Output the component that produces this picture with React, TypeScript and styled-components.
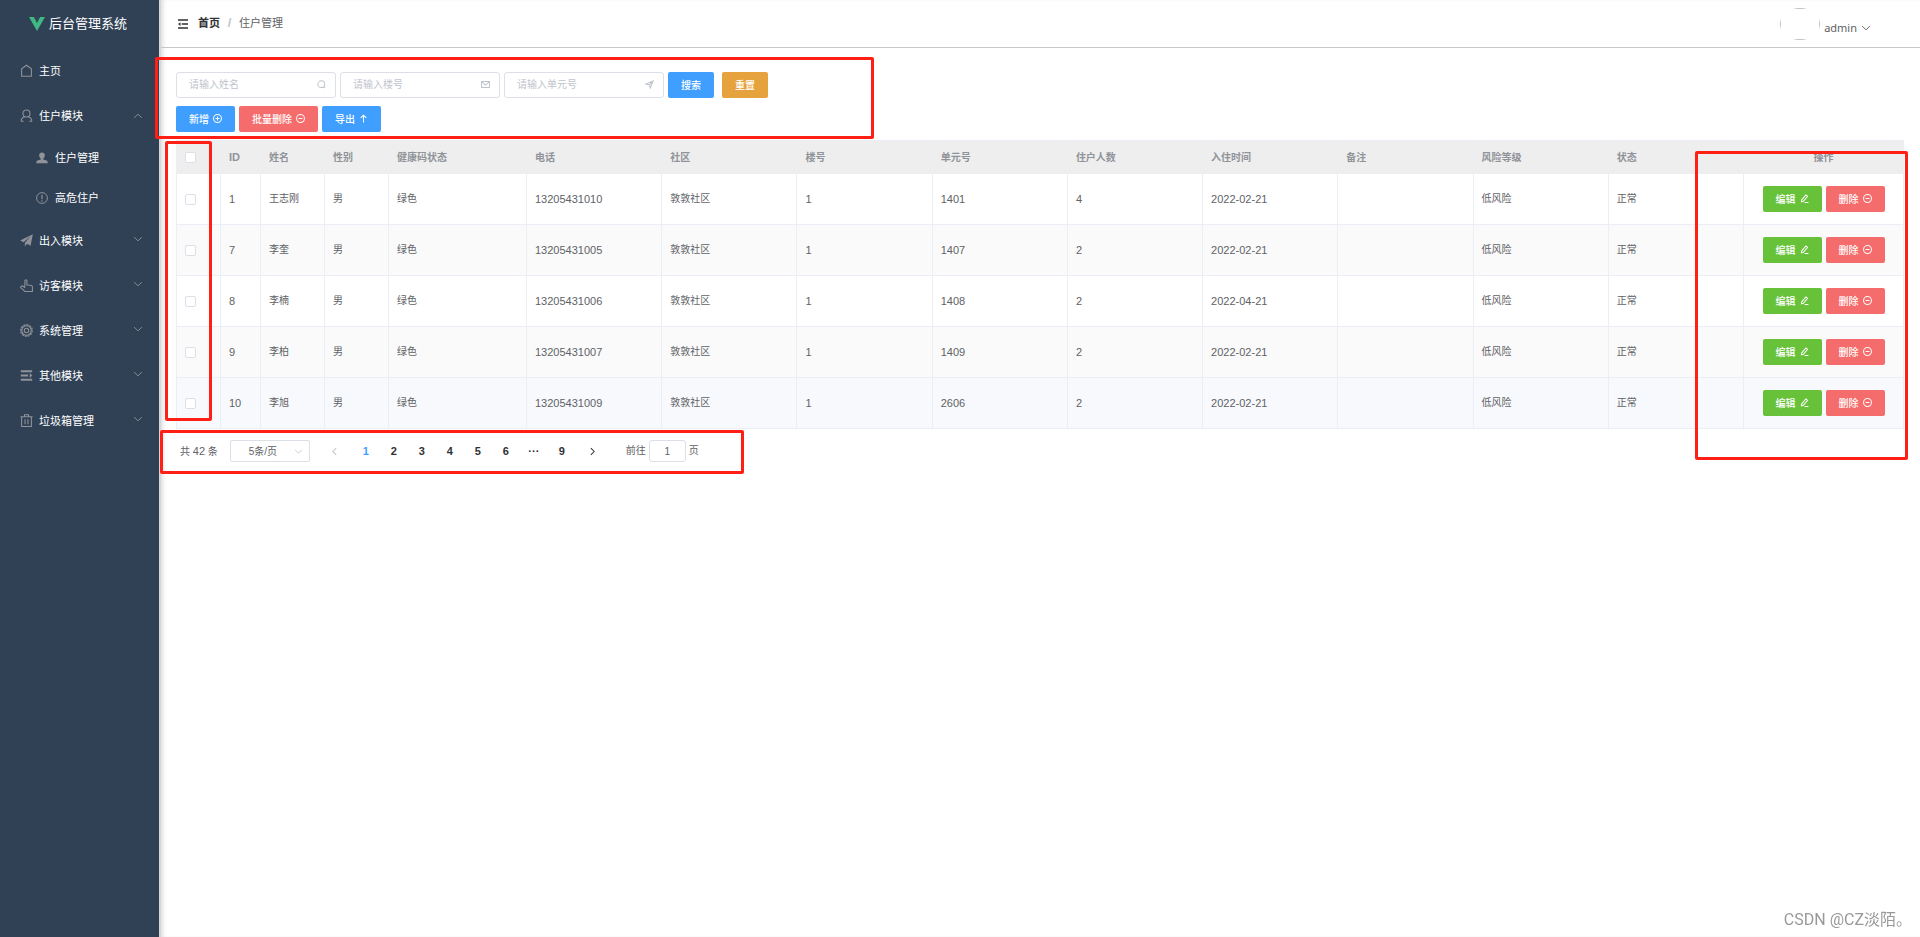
import React from "react";
import styled, { createGlobalStyle, css } from "styled-components";

const GlobalStyle = createGlobalStyle`
  *, *::before, *::after { box-sizing: border-box; }
  body {
    margin: 0;
    background: #fff;
    color: #606266;
    font-family: "Liberation Sans", "Noto Sans CJK SC", sans-serif;
    font-size: 10px;
    line-height: 16px;
  }
  button, input, select { font-family: inherit; }
`;

/* ---------- icons ---------- */

type IconName =
  | "home" | "user" | "userSolid" | "warning" | "plane" | "pointer" | "gear" | "operation" | "trash"
  | "down" | "up" | "left" | "right" | "search" | "mail" | "position"
  | "plus" | "minus" | "top" | "edit" | "fold";

const shapes: Record<IconName, React.ReactNode> = {
  home: <path d="M2 15V6l6-4.500L14 6v9z" />,
  user: <><circle cx="8" cy="5.500" r="4.300" /><path d="M1.500 15c0-3 2-5 4.500-5.500M14.500 15c0-3-2-5-4.500-5.500M1 15h3.500M11.500 15H15" /></>,
  userSolid: <path fill="currentColor" stroke="none" d="M8 .5c2.400 0 3.800 1.700 3.800 3.900 0 2-1 3.800-2.200 4.600v1l4.600 1.400c.8.300 1.300 1 1.300 1.900V15H.5v-1.700c0-.9.5-1.600 1.300-1.900L6.400 10V9C5.200 8.200 4.200 6.400 4.200 4.400 4.200 2.200 5.600.5 8 .5z" />,
  warning: <><circle cx="8" cy="8" r="7.200" /><path strokeWidth="1.600" d="M8 3.500v6M8 11v1.500" /></>,
  plane: <path fill="currentColor" stroke="none" d="M15.800.3L13 14.500 8.500 12 6 15.500V11l7-8.500L4.500 10 .2 8z" />,
  pointer: <path d="M6 10V2.200c0-1.600 2.500-1.600 2.500 0V7l5.500 1c1 .3 1.300 1 1.300 2v5.300H6L.8 10.500C.8 8.500 3 8 4 9l2 2" />,
  gear: <><path strokeDasharray="2.400 1.200" strokeWidth="1.600" d="M8 .9a7.100 7.100 0 1 1 0 14.200A7.100 7.100 0 1 1 8 .9" /><circle cx="8" cy="8" r="5.800" /><circle cx="8" cy="8" r="2.700" /></>,
  operation: <><path strokeWidth="2.400" d="M1 2.800h14M1 8h9M1 13.200h14" /><path fill="currentColor" stroke="none" d="M12 5l3.200 3L12 11z" /></>,
  trash: <path d="M.5 3.500h15M5.500 3V1h5v2M2 3.500v11.800h12V3.500M6.200 6.500v6M9.800 6.500v6" />,
  down: <path d="M2 5l6 6 6-6" />,
  up: <path d="M2 11l6-6 6 6" />,
  left: <path d="M11 2L5 8l6 6" />,
  right: <path d="M5 2l6 6-6 6" />,
  search: <><circle cx="7.500" cy="7.500" r="6" /><path d="M12 12l2.500 2.500" /></>,
  mail: <path d="M1 2.500h14v11H1zM1.500 3.500L8 9l6.500-5.500" />,
  position: <path d="M14.500 1.500L1.200 7.200 7.800 8.500 9.500 14.500zM14.500 1.500L7.800 8.500" />,
  plus: <><circle cx="8" cy="8" r="7" /><path d="M8 4.500v7M4.500 8h7" /></>,
  minus: <><circle cx="8" cy="8" r="7" /><path d="M4.500 8h7" /></>,
  top: <path d="M8 15V2M3 7l5-5 5 5" />,
  edit: <path d="M3 10.500L10.500 1.500l3 2.500L6 13l-3.500 1zM8 15h7" />,
  fold: <><path strokeWidth="2.400" d="M0 1.500h16M6 8h10M0 14.500h16" /><path fill="currentColor" stroke="none" d="M0 8l4-3v6z" /></>,
};

const Svg = styled.svg<{ $size: number }>`
  flex: none;
  width: ${(p) => p.$size}px;
  height: ${(p) => p.$size}px;
  fill: none;
  stroke: currentColor;
`;

function Icon({ name, size = 10, weight = 1.5 }: { name: IconName; size?: number; weight?: number }) {
  return (
    <Svg $size={size} viewBox="0 0 16 16" strokeWidth={weight} aria-hidden="true">
      {shapes[name]}
    </Svg>
  );
}

/* ---------- shell ---------- */

const Shell = styled.div`
  display: flex;
  min-height: 100vh;
`;

const Sidebar = styled.aside`
  flex: none;
  width: 159px;
  background: #304156;
  color: #fff;
`;

const Brand = styled.div`
  display: flex;
  align-items: center;
  gap: 4px;
  height: 48px;
  padding-left: 29px;
  font-size: 13px;
`;

const Logo = styled.svg`
  width: 16px;
  height: 14px;
`;

const Menu = styled.nav`
  display: flex;
  flex-direction: column;
`;

const MenuLink = styled.a<{ $sub?: boolean }>`
  display: flex;
  align-items: center;
  gap: ${(p) => (p.$sub ? 7 : 6)}px;
  height: ${(p) => (p.$sub ? 40 : 45)}px;
  padding: 0 16px 0 ${(p) => (p.$sub ? 36 : 20)}px;
  color: #fff;
  font-size: 11px;
  text-decoration: none;
  svg { color: #909399; }
`;

const MenuText = styled.span`
  flex: 1;
`;

const MenuArrow = styled.span<{ $open: boolean }>`
  display: flex;
  padding-bottom: ${(p) => (p.$open ? 0 : 4)}px;
`;

const Main = styled.div`
  display: flex;
  flex: 1;
  flex-direction: column;
  min-width: 0;
  border-left: 2px solid #d5d6da;
  box-shadow: inset 4px 0 4px -2px #dcdde0;
`;

const Header = styled.header`
  display: flex;
  align-items: center;
  height: 48px;
  padding: 0 49px 0 17px;
  border-bottom: 1px solid #c8c8cb;
`;

const FoldButton = styled.button`
  display: flex;
  margin-right: 10px;
  padding: 0;
  border: 0;
  background: none;
  color: #303133;
`;

const Crumbs = styled.nav`
  display: flex;
  flex: 1;
  gap: 7px;
  padding-bottom: 2px;
  font-size: 11px;
`;

const CrumbLink = styled.a`
  color: #303133;
  font-weight: 700;
  text-decoration: none;
`;

const Slash = styled.span`
  width: 5px;
  color: #c0c4cc;
  font-size: 13px;
  font-weight: 700;
  text-align: center;
`;

const Account = styled.button`
  display: flex;
  align-items: center;
  gap: 4px;
  padding: 0;
  border: 0;
  background: none;
  color: #606266;
  font-size: 11px;
`;

const AccountName = styled.span`
  padding-top: 8px;
  font-family: "Noto Sans", sans-serif;
`;

const AccountArrow = styled.span`
  display: flex;
  padding-top: 8px;
`;

const Avatar = styled.span`
  width: 40px;
  height: 32px;
  border-radius: 50%;
  overflow: hidden;
  &::before {
    content: "";
    display: block;
    height: 100%;
    border: 1px solid #c0c0c0;
  }
`;

const Content = styled.main`
  display: flex;
  flex-direction: column;
  padding: 24px 16px 16px 15px;
`;

/* ---------- controls ---------- */

const Highlight = styled.div<{ $top: number; $left?: number; $right?: number; $width: number; $height: number }>`
  position: absolute;
  top: ${(p) => p.$top}px;
  ${(p) => (p.$right === undefined ? css`left: ${p.$left}px;` : css`right: ${p.$right}px;`)}
  width: ${(p) => p.$width}px;
  height: ${(p) => p.$height}px;
  border: 3px solid #ff1f14;
  border-radius: 2px;
  pointer-events: none;
`;

const Toolbar = styled.section`
  position: relative;
  display: flex;
  flex-direction: column;
  gap: 8px;
  margin-bottom: 8px;
`;

const ToolRow = styled.div`
  display: flex;
  gap: 4px;
`;

const Field = styled.label`
  display: flex;
  align-items: center;
  width: 160px;
  height: 26px;
  padding: 0 9px 2px 12px;
  border: 1px solid #dcdfe6;
  border-radius: 3px;
  color: #c0c4cc;
`;

const FieldInput = styled.input`
  flex: 1;
  min-width: 0;
  padding: 0;
  border: 0;
  outline: 0;
  background: none;
  color: #606266;
  font-size: 10px;
  &::placeholder { color: #c0c4cc; }
`;

const tones = { primary: "#409eff", danger: "#f56c6c", warning: "#e6a23c", success: "#67c23a" };

const Button = styled.button<{ $tone: keyof typeof tones; $spaced?: boolean }>`
  display: inline-flex;
  align-items: center;
  justify-content: center;
  gap: 4px;
  height: 26px;
  margin-left: ${(p) => (p.$spaced ? 4 : 0)}px;
  padding: 0 13px 2px;
  border: 0;
  border-radius: 2px;
  background: ${(p) => tones[p.$tone]};
  color: #fff;
  font-size: 10px;
  font-weight: 500;
`;

/* ---------- table ---------- */

const TableWrap = styled.section`
  position: relative;
`;

const Table = styled.table`
  width: 100%;
  table-layout: fixed;
  border-spacing: 0;
  border-top: 1px solid #ebeef5;
  border-left: 1px solid #ebeef5;
`;

const HeadCell = styled.th<{ $center?: boolean }>`
  height: 33px;
  padding: 0 8px;
  border-right: 1px solid #ebeef5;
  background: #eee;
  color: #909399;
  font-weight: 700;
  text-align: ${(p) => (p.$center ? "center" : "left")};
`;

const Cell = styled.td`
  height: 51px;
  padding: 0 8px;
  border-right: 1px solid #ebeef5;
  border-bottom: 1px solid #ebeef5;
`;

const Row = styled.tr<{ $active?: boolean }>`
  background: #fff;
  &:nth-child(even) { background: #fafafa; }
  ${(p) => p.$active && css`background: #f8f9fc;`}
`;

const Num = styled.span`
  font-size: 11px;
`;

const Check = styled.input`
  display: block;
  appearance: none;
  width: 11px;
  height: 11px;
  margin: 0;
  border: 1px solid #dcdfe6;
  border-radius: 2px;
  background: #fff;
  &:checked { background: #409eff; border-color: #409eff; }
`;

const Actions = styled.div`
  display: flex;
  justify-content: center;
  gap: 4px;
`;

/* ---------- pagination ---------- */

const Pagination = styled.nav`
  position: relative;
  display: flex;
  align-items: center;
  height: 22px;
  margin-top: 11px;
  padding-left: 4px;
`;

const SizeBox = styled.span`
  position: relative;
  display: flex;
  margin: 0 8px 0 12px;
  color: #c0c4cc;
  svg { position: absolute; right: 7px; top: 7px; }
`;

const SizeSelect = styled.select`
  appearance: none;
  width: 80px;
  height: 22px;
  padding: 0 18px 0 4px;
  border: 1px solid #dcdfe6;
  border-radius: 2px;
  background: #fff;
  color: #606266;
  font-size: 10px;
  text-align: center;
  text-align-last: center;
`;

const PageButton = styled.button<{ $active?: boolean; $wide?: boolean }>`
  display: flex;
  align-items: center;
  justify-content: center;
  width: ${(p) => (p.$wide ? 34 : 28)}px;
  height: 22px;
  padding: 0;
  border: 0;
  background: none;
  color: ${(p) => (p.$active ? "#409eff" : "#303133")};
  font-size: 11px;
  font-weight: 700;
  &:disabled { color: #c0c4cc; }
`;

const Jump = styled.label`
  display: flex;
  align-items: center;
  gap: 3px;
  margin-left: 16px;
`;

const JumpInput = styled.input`
  width: 37px;
  height: 22px;
  padding: 0;
  border: 1px solid #dcdfe6;
  border-radius: 3px;
  color: #606266;
  font-size: 10px;
  text-align: center;
`;

const Watermark = styled.div`
  position: fixed;
  right: 8px;
  bottom: 7px;
  color: #999;
  font-family: Roboto, "Noto Sans CJK SC", sans-serif;
  font-size: 16px;
  line-height: 20px;
`;

/* ---------- data ---------- */

const menu: { label: string; icon: IconName; sub?: boolean; arrow?: "up" | "down" }[] = [
  { label: "主页", icon: "home" },
  { label: "住户模块", icon: "user", arrow: "up" },
  { label: "住户管理", icon: "userSolid", sub: true },
  { label: "高危住户", icon: "warning", sub: true },
  { label: "出入模块", icon: "plane", arrow: "down" },
  { label: "访客模块", icon: "pointer", arrow: "down" },
  { label: "系统管理", icon: "gear", arrow: "down" },
  { label: "其他模块", icon: "operation", arrow: "down" },
  { label: "垃圾箱管理", icon: "trash", arrow: "down" },
];

const filters: { label: string; icon: IconName }[] = [
  { label: "请输入姓名", icon: "search" },
  { label: "请输入楼号", icon: "mail" },
  { label: "请输入单元号", icon: "position" },
];

const columns: { title: string; width?: number }[] = [
  { title: "ID", width: 40 },
  { title: "姓名", width: 64 },
  { title: "性别", width: 64 },
  { title: "健康码状态", width: 138 },
  { title: "电话" },
  { title: "社区" },
  { title: "楼号" },
  { title: "单元号" },
  { title: "住户人数" },
  { title: "入住时间" },
  { title: "备注" },
  { title: "风险等级" },
  { title: "状态" },
];

const residents = [
  { id: 1, name: "王志刚", phone: "13205431010", unit: "1401", people: 4, date: "2022-02-21" },
  { id: 7, name: "李奎", phone: "13205431005", unit: "1407", people: 2, date: "2022-02-21" },
  { id: 8, name: "李楠", phone: "13205431006", unit: "1408", people: 2, date: "2022-04-21" },
  { id: 9, name: "李柏", phone: "13205431007", unit: "1409", people: 2, date: "2022-02-21" },
  { id: 10, name: "李旭", phone: "13205431009", unit: "2606", people: 2, date: "2022-02-21" },
];

export default function App() {
  return (
    <>
      <GlobalStyle />
      <Shell>
        <Sidebar>
          <Brand>
            <Logo viewBox="0 0 16 14" aria-hidden="true">
              <path fill="#41b883" d="M0 0h5L8 6l3-6h5L8 14z" />
              <path fill="#35495e" d="M5 0h1.800L8 2.200 9.200 0H11L8 5.200z" />
            </Logo>
            后台管理系统
          </Brand>
          <Menu aria-label="主菜单">
            {menu.map((m) => (
              <MenuLink key={m.label} href="#" $sub={m.sub}>
                <Icon name={m.icon} size={m.sub ? 12 : 13} weight={1.3} />
                <MenuText>{m.label}</MenuText>
                {m.arrow && (
                  <MenuArrow $open={m.arrow === "up"}>
                    <Icon name={m.arrow} size={10} />
                  </MenuArrow>
                )}
              </MenuLink>
            ))}
          </Menu>
        </Sidebar>
        <Main>
          <Header>
            <FoldButton type="button" aria-label="折叠菜单">
              <Icon name="fold" size={10} />
            </FoldButton>
            <Crumbs aria-label="面包屑">
              <CrumbLink href="#">首页</CrumbLink>
              <Slash>/</Slash>
              <span>住户管理</span>
            </Crumbs>
            <Account type="button">
              <Avatar />
              <AccountName>admin</AccountName>
              <AccountArrow><Icon name="down" size={10} /></AccountArrow>
            </Account>
          </Header>
          <Content>
            <Toolbar>
              <ToolRow>
                {filters.map((f) => (
                  <Field key={f.label}>
                    <FieldInput placeholder={f.label} aria-label={f.label} />
                    <Icon name={f.icon} size={9} weight={1.8} />
                  </Field>
                ))}
                <Button type="button" $tone="primary">搜索</Button>
                <Button type="button" $tone="warning" $spaced>重置</Button>
              </ToolRow>
              <ToolRow>
                <Button type="button" $tone="primary">新增<Icon name="plus" size={9} weight={1.8} /></Button>
                <Button type="button" $tone="danger">批量删除<Icon name="minus" size={9} weight={1.8} /></Button>
                <Button type="button" $tone="primary">导出<Icon name="top" size={9} weight={1.8} /></Button>
              </ToolRow>
              <Highlight $top={-15} $left={-21} $width={719} $height={82} />
            </Toolbar>
            <TableWrap>
              <Table>
                <colgroup>
                  <col width={44} />
                  {columns.map((c) => <col key={c.title} width={c.width} />)}
                  <col width={160} />
                </colgroup>
                <thead>
                  <tr>
                    <HeadCell><Check type="checkbox" aria-label="全选" /></HeadCell>
                    {columns.map((c) => <HeadCell key={c.title}>{c.title === "ID" ? <Num>ID</Num> : c.title}</HeadCell>)}
                    <HeadCell $center>操作</HeadCell>
                  </tr>
                </thead>
                <tbody>
                  {residents.map((r) => (
                    <Row key={r.id} $active={r.id === 10}>
                      <Cell><Check type="checkbox" aria-label={`选择 ${r.name}`} /></Cell>
                      <Cell><Num>{r.id}</Num></Cell>
                      <Cell>{r.name}</Cell>
                      <Cell>男</Cell>
                      <Cell>绿色</Cell>
                      <Cell><Num>{r.phone}</Num></Cell>
                      <Cell>敦敦社区</Cell>
                      <Cell><Num>1</Num></Cell>
                      <Cell><Num>{r.unit}</Num></Cell>
                      <Cell><Num>{r.people}</Num></Cell>
                      <Cell><Num>{r.date}</Num></Cell>
                      <Cell />
                      <Cell>低风险</Cell>
                      <Cell>正常</Cell>
                      <Cell>
                        <Actions>
                          <Button type="button" $tone="success">编辑<Icon name="edit" size={9} weight={1.8} /></Button>
                          <Button type="button" $tone="danger">删除<Icon name="minus" size={9} weight={1.8} /></Button>
                        </Actions>
                      </Cell>
                    </Row>
                  ))}
                </tbody>
              </Table>
              <Highlight $top={1} $left={-11} $width={47} $height={280} />
              <Highlight $top={11} $right={-4} $width={213} $height={309} />
            </TableWrap>
            <Pagination aria-label="分页">
              <span>共 <Num>42</Num> 条</span>
              <SizeBox>
                <SizeSelect aria-label="每页条数" defaultValue="5">
                  <option value="5">5条/页</option>
                  <option value="10">10条/页</option>
                </SizeSelect>
                <Icon name="down" size={9} />
              </SizeBox>
              <PageButton type="button" aria-label="上一页" $wide disabled><Icon name="left" size={9} weight={1.8} /></PageButton>
              {["1", "2", "3", "4", "5", "6", "···", "9"].map((p) => (
                <PageButton key={p} type="button" $active={p === "1"}>{p}</PageButton>
              ))}
              <PageButton type="button" aria-label="下一页" $wide><Icon name="right" size={9} weight={1.8} /></PageButton>
              <Jump>
                前往
                <JumpInput defaultValue="1" />
                页
              </Jump>
              <Highlight $top={-10} $left={-16} $width={584} $height={44} />
            </Pagination>
          </Content>
        </Main>
      </Shell>
      <Watermark>CSDN @CZ淡陌。</Watermark>
    </>
  );
}
